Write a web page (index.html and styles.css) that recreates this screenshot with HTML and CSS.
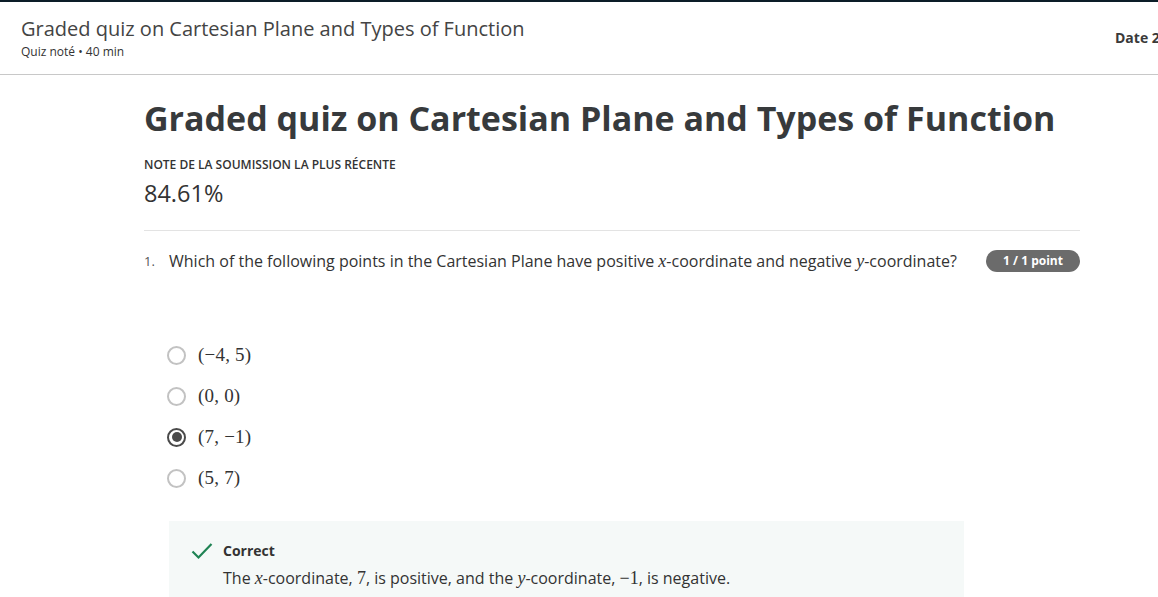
FILE: index.html
```html
<!DOCTYPE html>
<html lang="fr">
<head>
<meta charset="utf-8">
<title>Graded quiz</title>
<link rel="stylesheet" href="styles.css">
</head>
<body>
<div class="topstrip"></div>
<header class="bar">
  <div class="bar-title">
    <div class="bar-name">Graded quiz on Cartesian Plane and Types of Function</div>
    <div class="bar-sub">Quiz noté • 40 min</div>
  </div>
  <div class="bar-date">Date 23 janv. 2024</div>
</header>
<main class="content">
  <h1 class="quiz-title">Graded quiz on Cartesian Plane and Types of Function</h1>
  <div class="grade-label">NOTE DE LA SOUMISSION LA PLUS RÉCENTE</div>
  <div class="grade-value">84.61%</div>
  <div class="divider"></div>
  <section class="question">
    <div class="q-row">
      <span class="q-num">1.</span>
      <span class="q-text">Which of the following points in the Cartesian Plane have positive <i class="m">x</i>-coordinate and negative <i class="m">y</i>-coordinate?</span>
      <span class="q-badge">1 / 1 point</span>
    </div>
    <div class="options">
      <label class="opt"><span class="radio"></span><span class="math">(−4, 5)</span></label>
      <label class="opt"><span class="radio"></span><span class="math">(0, 0)</span></label>
      <label class="opt"><span class="radio checked"></span><span class="math">(7, −1)</span></label>
      <label class="opt"><span class="radio"></span><span class="math">(5, 7)</span></label>
    </div>
    <div class="feedback">
      <svg class="check" width="22" height="18" viewBox="0 0 22 18"><path d="M1.5 9.5 L7.5 15.5 L20.5 2" fill="none" stroke="#1f8354" stroke-width="2.2"/></svg>
      <div class="fb-body">
        <div class="fb-title">Correct</div>
        <div class="fb-text">The <i class="m">x</i>-coordinate, <span class="m">7</span>, is positive, and the <i class="m">y</i>-coordinate, <span class="m">−1</span>, is negative.</div>
      </div>
    </div>
  </section>
</main>
</body>
</html>
```
FILE: styles.css
```css
html, body {
  margin: 0;
  padding: 0;
  overflow: hidden;
  background: #fff;
}
body {
  font-family: "Open Sans", "Liberation Sans", sans-serif;
  color: #333;
}
.topstrip {
  height: 2px;
  background: #0c1d28;
}
.bar {
  display: flex;
  justify-content: space-between;
  align-items: center;
  height: 72px;
  padding-left: 21px;
  border-bottom: 1px solid #c8c8c8;
}
.bar-title {
  padding-top: 1px;
}
.bar-name {
  font-size: 20px;
  line-height: 26px;
  color: #444;
}
.bar-sub {
  font-size: 12px;
  line-height: 19px;
  color: #333;
}
.bar-date {
  flex: 0 0 43px;
  overflow: hidden;
  white-space: nowrap;
  font-size: 14px;
  font-weight: 700;
  color: #3a3a3a;
  padding-bottom: 2px;
}
.content {
  width: 936px;
  margin-left: 144px;
}
.quiz-title {
  margin: 20px 0 0;
  font-size: 34px;
  line-height: 46px;
  font-weight: 700;
  color: #373a3c;
}
.grade-label {
  margin-top: 15px;
  font-size: 12px;
  font-weight: 600;
  line-height: 18px;
  color: #333;
}
.grade-value {
  margin-top: 4px;
  font-size: 23.5px;
  line-height: 30px;
  color: #333;
}
.divider {
  margin-top: 22px;
  height: 1px;
  background: #e3e3e3;
}
.q-row {
  display: flex;
  align-items: center;
  margin-top: 19px;
}
.q-num {
  width: 25px;
  font-size: 13px;
  color: #555;
}
.q-text {
  flex: 1;
  font-size: 16px;
  color: #333;
}
.m {
  font-family: "Liberation Serif", "DejaVu Serif", serif;
  font-size: 18px;
}
.q-badge {
  flex: none;
  width: 94px;
  height: 22px;
  line-height: 22px;
  text-align: center;
  border-radius: 11px;
  background: #6b6b6b;
  color: #fff;
  font-size: 12px;
  font-weight: 700;
}
.options {
  margin-top: 71px;
  margin-left: 23px;
  display: flex;
  flex-direction: column;
  gap: 17px;
}
.opt {
  display: flex;
  align-items: center;
  height: 24px;
  gap: 12px;
}
.radio {
  box-sizing: border-box;
  width: 19px;
  height: 19px;
  border: 2px solid #c2c2c2;
  border-radius: 50%;
  display: flex;
  align-items: center;
  justify-content: center;
}
.radio.checked {
  border: 2px solid #4a4a4a;
}
.radio.checked::after {
  content: "";
  width: 10px;
  height: 10px;
  border-radius: 50%;
  background: #4a4a4a;
}
.math {
  font-family: "Liberation Serif", "DejaVu Serif", serif;
  font-size: 19px;
  letter-spacing: 0.2px;
  color: #333;
}
.feedback {
  margin: 31px 0 0 25px;
  width: 795px;
  box-sizing: border-box;
  background: #f5f9f8;
  display: flex;
  padding: 20px 0 10px 22px;
  gap: 10px;
}
.check {
  margin-top: 1px;
}
.fb-title {
  font-size: 14px;
  font-weight: 700;
  line-height: 20px;
  color: #333;
}
.fb-text {
  margin-top: 6px;
  font-size: 16px;
  line-height: 22px;
  color: #333;
}
```
